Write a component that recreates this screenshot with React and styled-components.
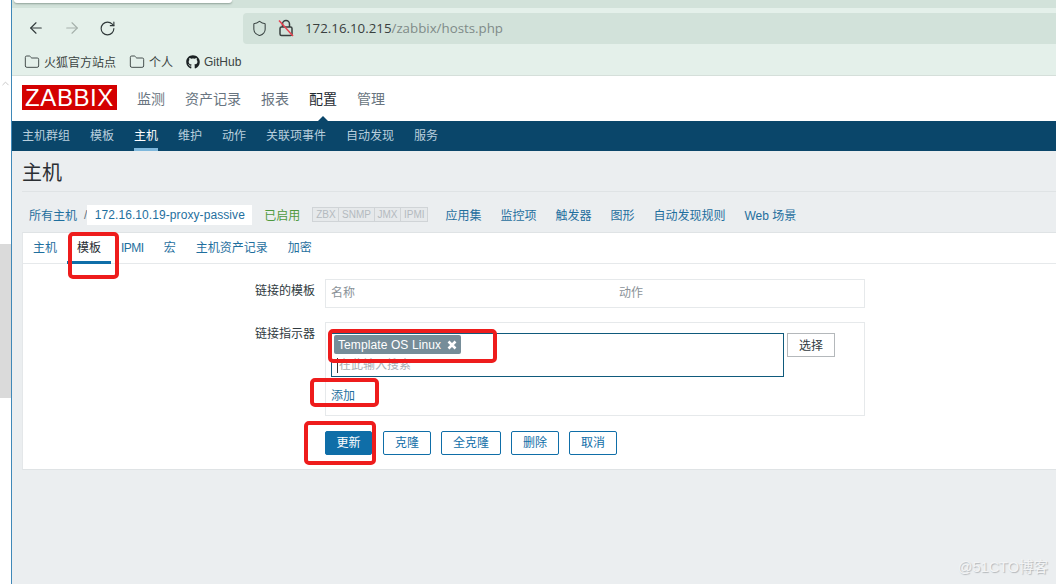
import React from 'react';
import styled, { createGlobalStyle } from 'styled-components';
import { ArrowLeft, ArrowRight, RotateCw, Shield, Folder, ChevronUp } from 'lucide-react';
import { FaGithub } from 'react-icons/fa';

const GlobalStyle = createGlobalStyle`
    html, body {
        margin: 0;
        padding: 0;
        width: 1056px;
        height: 584px;
        overflow: hidden;
        background: #fff;
    }
    * { box-sizing: border-box; }
    body {
        font-family: "Liberation Sans", "Noto Sans CJK SC", sans-serif;
        font-size: 12px;
    }
`;

const Page = styled.div`
    position: relative;
    display: flex;
    width: 1056px;
    height: 584px;
    overflow: hidden;
`;

const LeftStrip = styled.div`
    width: 12px;
    flex: none;
    display: flex;
    flex-direction: column;
    background: #fff;
    border-right: 1px solid #3f88b8;
    color: #c4c4c4;
    padding-top: 78px;
`;

const StripThumb = styled.div`
    height: 154px;
    margin-top: 155px;
    background: #dadada;
`;

const Main = styled.div`
    flex: 1;
    min-width: 0;
    display: flex;
    flex-direction: column;
`;

const TabStrip = styled.div`
    height: 8px;
    background: #d2e2da;
    padding-left: 2px;
`;

const ActiveTab = styled.div`
    width: 218px;
    height: 3px;
    background: #fff;
    border-radius: 0 0 4px 4px;
    box-shadow: 0 1px 2px #8fa098;
`;

const NavBar = styled.div`
    height: 40px;
    background: #e4f0ea;
    display: flex;
    align-items: center;
    padding-left: 15px;
`;

const NavButton = styled.div`
    width: 36px;
    display: flex;
    color: ${(p) => (p.$off ? '#a5b0ab' : '#30393a')};
`;

const UrlBar = styled.div`
    width: 813px;
    height: 31px;
    margin-left: 108px;
    background: #d2e2da;
    border-radius: 4px 0 0 4px;
    display: flex;
    align-items: center;
    padding-left: 8px;
    gap: 8px;
    color: #3c4645;
`;

const UrlText = styled.div`
    font-family: "Open Sans", "Liberation Sans", sans-serif;
    font-size: 13.3px;
    margin-left: 1px;
    color: #7f8b88;
    b {
        font-weight: 400;
        color: #39403f;
    }
`;

const Bookmarks = styled.div`
    height: 28px;
    background: #e4f0ea;
    border-bottom: 1px solid #d5dfda;
    display: flex;
    align-items: center;
    padding-left: 12px;
    gap: 13px;
`;

const Bookmark = styled.div`
    display: flex;
    align-items: center;
    gap: 4px;
    font-size: 12px;
    color: #3b4443;
`;

const TopMenu = styled.div`
    height: 45px;
    background: #fff;
    display: flex;
    align-items: center;
    padding-left: 10px;
`;

const Logo = styled.div`
    width: 95px;
    height: 25px;
    background: #d40000;
    color: #fff;
    font-size: 24px;
    line-height: 25px;
    text-align: center;
    letter-spacing: 0.6px;
    margin-right: 20px;
    margin-top: -3px;
`;

const TopItem = styled.div`
    position: relative;
    font-size: 14px;
    margin-right: 20px;
    margin-top: -1px;
    color: ${(p) => (p.$active ? '#1f2c33' : '#687480')};
    ${(p) =>
        p.$active &&
        `&:after {
            content: '';
            position: absolute;
            left: 7px;
            bottom: -15px;
            border: 7px solid transparent;
            border-top: 0;
            border-bottom-color: #0a466a;
        }`}
`;

const SubMenu = styled.div`
    height: 30px;
    background: #0a466a;
    display: flex;
    padding-left: 10px;
    gap: 20px;
`;

const SubItem = styled.div`
    height: 30px;
    line-height: 30px;
    font-size: 12px;
    color: ${(p) => (p.$active ? '#fff' : '#b9cfdd')};
    border-bottom: 3px solid ${(p) => (p.$active ? '#7fb8dc' : 'transparent')};
`;

const Content = styled.div`
    flex: 1;
    background: #ebeef0;
    padding-left: 10px;
    display: flex;
    flex-direction: column;
`;

const Title = styled.div`
    height: 41px;
    line-height: 44px;
    font-size: 20px;
    color: #2b2f33;
    border-bottom: 1px solid #dfe3e5;
`;

const Crumbs = styled.div`
    height: 40px;
    display: flex;
    align-items: center;
    padding: 5px 0 0 7px;
    font-size: 12px;
`;

const BlueLink = styled.span`
    color: #1f6f9e;
    ${(p) => p.$gap && `margin-right: ${p.$gap}px;`}
`;

const Slash = styled.span`
    color: #687480;
    margin: 0 0 0 7px;
`;

const CrumbHost = styled.div`
    background: #fff;
    width: 165px;
    height: 20px;
    line-height: 21px;
    text-align: center;
    white-space: nowrap;
    letter-spacing: 0.08px;
    color: #1f6f9e;
    margin-right: 12px;
`;

const Enabled = styled.span`
    color: #4f9a3e;
    margin-right: 12px;
`;

const Badges = styled.div`
    display: flex;
    border: 1px solid #d0d4d7;
    background: #e6e9eb;
    margin-right: 17px;
    height: 15px;
    width: 116px;
`;

const Badge = styled.span`
    flex: auto;
    text-align: center;
    font-size: 10px;
    line-height: 13px;
    color: #b4babf;
    border-left: ${(p) => (p.$first ? 'none' : '1px solid #d0d4d7')};
`;

const Card = styled.div`
    flex: 1;
    max-height: 238px;
    background: #fff;
    border-top: 1px solid #dfe3e5;
    border-bottom: 1px solid #dfe3e5;
    border-left: 1px solid #e4e7e9;
    display: flex;
    flex-direction: column;
`;

const Tabs = styled.div`
    height: 31px;
    display: flex;
    border-bottom: 1px solid #e6e9eb;
`;

const TabItem = styled.div`
    height: 31px;
    line-height: 31px;
    padding: 0 10px;
    font-size: 12px;
    letter-spacing: ${(p) => (p.$latin ? '-0.5px' : '0')};
    color: ${(p) => (p.$active ? '#1f2c33' : '#1f6f9e')};
    ${(p) => p.$active && 'border-bottom: 3px solid #0f6ea8;'}
`;

const Form = styled.div`
    padding-top: 15px;
    display: flex;
    flex-direction: column;
`;

const FormRow = styled.div`
    display: flex;
    margin-bottom: 14px;
`;

const Label = styled.div`
    width: 292px;
    text-align: right;
    font-size: 12px;
    color: #2f3a40;
    margin-right: 10px;
    padding-top: ${(p) => p.$top}px;
`;

const Box = styled.div`
    width: 540px;
    border: 1px solid #e6e9eb;
`;

const TableHead = styled.div`
    display: grid;
    grid-template-columns: 288px 1fr;
    height: 27px;
    line-height: 27px;
    padding-left: 5px;
    color: #8a9298;
    font-size: 12px;
`;

const SelectWrap = styled.div`
    display: flex;
    padding: 10px 0 0 5px;
    gap: 3px;
    align-items: flex-start;
`;

const MultiSelect = styled.div`
    width: 453px;
    height: 44px;
    border: 1px solid #0f5a7c;
    padding: 1px 2px;
`;

const Chip = styled.div`
    display: inline-flex;
    align-items: center;
    height: 19px;
    padding: 0 4px;
    gap: 6px;
    background: #768d99;
    color: #fff;
    border-radius: 2px;
    font-size: 12px;
    letter-spacing: 0.1px;
`;

const Placeholder = styled.div`
    margin-top: 4px;
    height: 15px;
    padding-left: 1px;
    line-height: 15px;
    border-left: 1px solid #333;
    margin-left: 3px;
    color: #a9b0b5;
    font-size: 12px;
`;

const PickButton = styled.div`
    width: 48px;
    height: 24px;
    border: 1px solid #b4b8bb;
    text-align: center;
    line-height: 24px;
    color: #2f3a40;
    font-size: 12px;
`;

const AddLink = styled.div`
    padding: 11px 0 11px 5px;
    font-size: 12px;
    line-height: 16px;
    color: #1f6f9e;
`;

const Actions = styled.div`
    display: flex;
    margin: 1px 0 0 302px;
    gap: 10px;
`;

const ActionButton = styled.div`
    height: 24px;
    line-height: 23px;
    width: ${(p) => p.$w}px;
    text-align: center;
    font-size: 12px;
    border-radius: 2px;
    border: 1px solid #0f6ea8;
    background: ${(p) => (p.$primary ? '#0f6ea8' : '#fff')};
    color: ${(p) => (p.$primary ? '#fff' : '#0f6ea8')};
    ${(p) => p.$primary && 'margin-right: 1px;'}
`;

// red marks somebody drew on the screenshot
const RedMark = styled.div`
    position: absolute;
    left: ${(p) => p.$x}px;
    top: ${(p) => p.$y}px;
    width: ${(p) => p.$w}px;
    height: ${(p) => p.$h}px;
    border: 4px solid #ee1c1c;
    border-radius: 5px;
`;

const Watermark = styled.div`
    position: absolute;
    right: 8px;
    bottom: 8px;
    font-size: 14.5px;
    line-height: 18px;
    color: #f3f4f5;
    text-shadow: 1px 1px 1px #b4b8bb;
`;

const LockOff = () => (
    <svg width="20" height="20" viewBox="0 0 20 20" fill="none" stroke="#39403f" strokeWidth="1.5">
        <rect x="4" y="9" width="12" height="8.5" rx="1.5" />
        <path d="M6.5 9V6a3.5 3.5 0 0 1 7 0v3" />
        <path d="M3 2.5 17 18" stroke="#e8414f" />
    </svg>
);

const subItems = ['主机群组', '模板', '主机', '维护', '动作', '关联项事件', '自动发现', '服务'];
const hostLinks = [
    ['应用集', 19],
    ['监控项', 19],
    ['触发器', 19],
    ['图形', 19],
    ['自动发现规则', 19],
    ['Web 场景', 0],
];
const tabs = ['主机', '模板', 'IPMI', '宏', '主机资产记录', '加密'];
const actions = [
    ['更新', 47, true],
    ['克隆', 48],
    ['全克隆', 60],
    ['删除', 48],
    ['取消', 48],
];

export default function App() {
    return (
        <Page>
            <GlobalStyle />
            <LeftStrip>
                <ChevronUp size={11} strokeWidth={2} />
                <StripThumb />
            </LeftStrip>
            <Main>
                <TabStrip>
                    <ActiveTab />
                </TabStrip>
                <NavBar>
                    <NavButton>
                        <ArrowLeft size={18} strokeWidth={1.5} />
                    </NavButton>
                    <NavButton $off>
                        <ArrowRight size={18} strokeWidth={1.5} />
                    </NavButton>
                    <NavButton>
                        <RotateCw size={17} strokeWidth={1.6} />
                    </NavButton>
                    <UrlBar>
                        <Shield size={17} strokeWidth={1.5} />
                        <LockOff />
                        <UrlText>
                            <b>172.16.10.215</b>/zabbix/hosts.php
                        </UrlText>
                    </UrlBar>
                </NavBar>
                <Bookmarks>
                    <Bookmark>
                        <Folder size={16} strokeWidth={1.4} />
                        火狐官方站点
                    </Bookmark>
                    <Bookmark>
                        <Folder size={16} strokeWidth={1.4} />
                        个人
                    </Bookmark>
                    <Bookmark>
                        <FaGithub size={14} color="#1c2224" />
                        GitHub
                    </Bookmark>
                </Bookmarks>
                <TopMenu>
                    <Logo>ZABBIX</Logo>
                    <TopItem>监测</TopItem>
                    <TopItem>资产记录</TopItem>
                    <TopItem>报表</TopItem>
                    <TopItem $active>配置</TopItem>
                    <TopItem>管理</TopItem>
                </TopMenu>
                <SubMenu>
                    {subItems.map((s) => (
                        <SubItem key={s} $active={s === '主机'}>
                            {s}
                        </SubItem>
                    ))}
                </SubMenu>
                <Content>
                    <Title>主机</Title>
                    <Crumbs>
                        <BlueLink>所有主机</BlueLink>
                        <Slash>/</Slash>
                        <CrumbHost>172.16.10.19-proxy-passive</CrumbHost>
                        <Enabled>已启用</Enabled>
                        <Badges>
                            <Badge $first>ZBX</Badge>
                            <Badge>SNMP</Badge>
                            <Badge>JMX</Badge>
                            <Badge>IPMI</Badge>
                        </Badges>
                        {hostLinks.map(([t, gap]) => (
                            <BlueLink key={t} $gap={gap}>
                                {t}
                            </BlueLink>
                        ))}
                    </Crumbs>
                    <Card>
                        <Tabs>
                            {tabs.map((t) => (
                                <TabItem key={t} $active={t === '模板'} $latin={t === 'IPMI'}>
                                    {t}
                                </TabItem>
                            ))}
                        </Tabs>
                        <Form>
                            <FormRow>
                                <Label $top={2}>链接的模板</Label>
                                <Box>
                                    <TableHead>
                                        <span>名称</span>
                                        <span>动作</span>
                                    </TableHead>
                                </Box>
                            </FormRow>
                            <FormRow>
                                <Label $top={2}>链接指示器</Label>
                                <Box>
                                    <SelectWrap>
                                        <MultiSelect>
                                            <Chip>
                                                Template OS Linux
                                                <svg width="10" height="10" viewBox="0 0 10 10" stroke="#fff" strokeWidth="2.6">
                                                    <path d="M1.5 1.5l7 7M8.5 1.5l-7 7" />
                                                </svg>
                                            </Chip>
                                            <Placeholder>在此输入搜索</Placeholder>
                                        </MultiSelect>
                                        <PickButton>选择</PickButton>
                                    </SelectWrap>
                                    <AddLink>添加</AddLink>
                                </Box>
                            </FormRow>
                            <Actions>
                                {actions.map(([t, w, primary]) => (
                                    <ActionButton key={t} $w={w} $primary={primary}>
                                        {t}
                                    </ActionButton>
                                ))}
                            </Actions>
                        </Form>
                    </Card>
                </Content>
            </Main>
            <RedMark $x={68} $y={232} $w={51} $h={47} />
            <RedMark $x={328} $y={329} $w={169} $h={34} />
            <RedMark $x={310} $y={378} $w={69} $h={29} />
            <RedMark $x={304} $y={421} $w={72} $h={44} />
            <Watermark>@51CTO博客</Watermark>
        </Page>
    );
}
